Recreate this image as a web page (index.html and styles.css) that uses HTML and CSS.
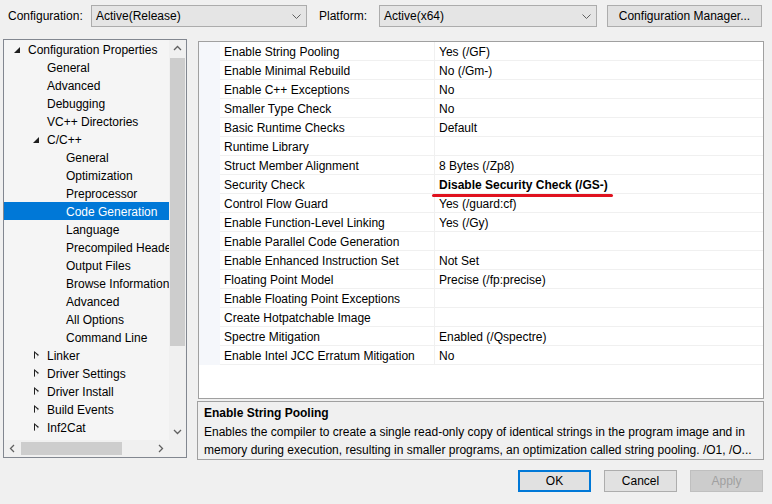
FILE: index.html
```html
<!DOCTYPE html>
<html lang="en">
<head>
    <meta charset="UTF-8">
    <title>Property Pages</title>
    <link rel="stylesheet" href="styles.css">
</head>
<body>

<!-- Configuration / Platform bar -->
<div class="toolbar">
    <span class="label label-config">Configuration:</span>
    <div class="combo combo-config">
        <span>Active(Release)</span>
        <svg class="chevron" width="9" height="5" viewBox="0 0 9 5"><polyline points="0.5,0.5 4.5,4.5 8.5,0.5" fill="none" stroke="#606060" stroke-width="1"/></svg>
    </div>
    <span class="label label-platform">Platform:</span>
    <div class="combo combo-platform">
        <span>Active(x64)</span>
        <svg class="chevron" width="9" height="5" viewBox="0 0 9 5"><polyline points="0.5,0.5 4.5,4.5 8.5,0.5" fill="none" stroke="#606060" stroke-width="1"/></svg>
    </div>
    <button class="btn btn-manager">Configuration Manager...</button>
</div>

<div class="main">

    <!-- Tree -->
    <div class="tree">
        <div class="tree-body">
            <div class="tree-list">
                <div class="node lvl0"><span class="tri open"></span>Configuration Properties</div>
                <div class="node lvl1">General</div>
                <div class="node lvl1">Advanced</div>
                <div class="node lvl1">Debugging</div>
                <div class="node lvl1">VC++ Directories</div>
                <div class="node lvl1 has-tri"><span class="tri open"></span>C/C++</div>
                <div class="node lvl2">General</div>
                <div class="node lvl2">Optimization</div>
                <div class="node lvl2">Preprocessor</div>
                <div class="node lvl2 selected">Code Generation</div>
                <div class="node lvl2">Language</div>
                <div class="node lvl2">Precompiled Headers</div>
                <div class="node lvl2">Output Files</div>
                <div class="node lvl2">Browse Information</div>
                <div class="node lvl2">Advanced</div>
                <div class="node lvl2">All Options</div>
                <div class="node lvl2">Command Line</div>
                <div class="node lvl1 has-tri"><span class="tri closed"></span>Linker</div>
                <div class="node lvl1 has-tri"><span class="tri closed"></span>Driver Settings</div>
                <div class="node lvl1 has-tri"><span class="tri closed"></span>Driver Install</div>
                <div class="node lvl1 has-tri"><span class="tri closed"></span>Build Events</div>
                <div class="node lvl1 has-tri"><span class="tri closed"></span>Inf2Cat</div>
            </div>
            <div class="vscroll">
                <svg class="arrow" width="17" height="17" viewBox="0 0 17 17"><polyline points="5,10 8.5,6.5 12,10" fill="none" stroke="#606060" stroke-width="1.3"/></svg>
                <div class="vtrack"><div class="vthumb"></div></div>
                <svg class="arrow" width="17" height="17" viewBox="0 0 17 17"><polyline points="5,7 8.5,10.5 12,7" fill="none" stroke="#606060" stroke-width="1.3"/></svg>
            </div>
        </div>
        <div class="tree-foot">
            <div class="hscroll">
                <svg class="arrow" width="17" height="17" viewBox="0 0 17 17"><polyline points="10,5 6.5,8.5 10,12" fill="none" stroke="#606060" stroke-width="1.3"/></svg>
                <div class="htrack"><div class="hthumb"></div></div>
                <svg class="arrow" width="17" height="17" viewBox="0 0 17 17"><polyline points="7,5 10.5,8.5 7,12" fill="none" stroke="#606060" stroke-width="1.3"/></svg>
            </div>
            <div class="corner"></div>
        </div>
    </div>

    <div class="right">

        <!-- Property grid -->
        <div class="grid">
            <div class="row"><div class="gutter"></div><div class="name">Enable String Pooling</div><div class="value">Yes (/GF)</div></div>
            <div class="row"><div class="gutter"></div><div class="name">Enable Minimal Rebuild</div><div class="value">No (/Gm-)</div></div>
            <div class="row"><div class="gutter"></div><div class="name">Enable C++ Exceptions</div><div class="value">No</div></div>
            <div class="row"><div class="gutter"></div><div class="name">Smaller Type Check</div><div class="value">No</div></div>
            <div class="row"><div class="gutter"></div><div class="name">Basic Runtime Checks</div><div class="value">Default</div></div>
            <div class="row"><div class="gutter"></div><div class="name">Runtime Library</div><div class="value"></div></div>
            <div class="row"><div class="gutter"></div><div class="name">Struct Member Alignment</div><div class="value">8 Bytes (/Zp8)</div></div>
            <div class="row"><div class="gutter"></div><div class="name">Security Check</div><div class="value"><span class="changed">Disable Security Check (/GS-)</span></div></div>
            <div class="row"><div class="gutter"></div><div class="name">Control Flow Guard</div><div class="value">Yes (/guard:cf)</div></div>
            <div class="row"><div class="gutter"></div><div class="name">Enable Function-Level Linking</div><div class="value">Yes (/Gy)</div></div>
            <div class="row"><div class="gutter"></div><div class="name">Enable Parallel Code Generation</div><div class="value"></div></div>
            <div class="row"><div class="gutter"></div><div class="name">Enable Enhanced Instruction Set</div><div class="value">Not Set</div></div>
            <div class="row"><div class="gutter"></div><div class="name">Floating Point Model</div><div class="value">Precise (/fp:precise)</div></div>
            <div class="row"><div class="gutter"></div><div class="name">Enable Floating Point Exceptions</div><div class="value"></div></div>
            <div class="row"><div class="gutter"></div><div class="name">Create Hotpatchable Image</div><div class="value"></div></div>
            <div class="row"><div class="gutter"></div><div class="name">Spectre Mitigation</div><div class="value">Enabled (/Qspectre)</div></div>
            <div class="row"><div class="gutter"></div><div class="name">Enable Intel JCC Erratum Mitigation</div><div class="value">No</div></div>
        </div>

        <!-- Description -->
        <div class="desc">
            <div class="desc-title">Enable String Pooling</div>
            <div class="desc-line">Enables the compiler to create a single read-only copy of identical strings in the program image and in</div>
            <div class="desc-line">memory during execution, resulting in smaller programs, an optimization called string pooling. /O1, /O...</div>
        </div>

    </div>
</div>

<!-- Dialog buttons -->
<div class="footer">
    <button class="btn btn-ok">OK</button>
    <button class="btn">Cancel</button>
    <button class="btn" disabled>Apply</button>
</div>

</body>
</html>
```

FILE: styles.css
```css
body {
    margin: 0;
    width: 772px;
    height: 504px;
    background-color: #f0f0f0;
    font-family: "Liberation Sans", Arial, sans-serif;
    font-size: 12px;
    color: #000;
    overflow: hidden;
}

/* top bar */
.toolbar {
    display: flex;
    align-items: center;
    padding: 5px 0 0 8px;
    height: 22px;
}

.label-config {
    width: 83px;
}

.label-platform {
    width: 60px;
    margin-left: 12px;
}

.combo {
    box-sizing: border-box;
    height: 22px;
    display: flex;
    align-items: center;
    justify-content: space-between;
    padding: 0 5px 0 4px;
    background-color: #e5e5e5;
    border: 1px solid #acacac;
}

.combo-config {
    width: 216px;
}

.combo-platform {
    width: 218px;
}

.btn {
    box-sizing: border-box;
    height: 22px;
    padding: 0;
    font-family: inherit;
    font-size: 12px;
    color: #000;
    background-color: #e1e1e1;
    border: 1px solid #adadad;
}

.btn-manager {
    width: 155px;
    margin-left: 10px;
}

/* main area */
.main {
    display: flex;
    margin-top: 12px;
    padding-left: 3px;
}

.tree {
    width: 184px;
    height: 419px;
    box-sizing: border-box;
    border: 1px solid #828790;
    background-color: #f5f5f5;
    display: flex;
    flex-direction: column;
}

.tree-body {
    display: flex;
    height: 400px;
}

.tree-list {
    width: 165px;
    overflow: hidden;
}

.node {
    box-sizing: border-box;
    height: 18px;
    padding-top: 1px;
    line-height: 18px;
    white-space: nowrap;
    position: relative;
}

.lvl0 {
    padding-left: 24px;
}

.lvl1 {
    padding-left: 43px;
}

.lvl2 {
    padding-left: 62px;
}

.selected {
    background-color: #0078d7;
    color: #fff;
}

.tri {
    position: absolute;
    top: 0;
    width: 0;
    height: 0;
}

.lvl0 .tri {
    left: 10px;
}

.lvl1 .tri {
    left: 29px;
}

.tri.open {
    top: 7px;
    border-left: 6px solid transparent;
    border-bottom: 6px solid #1e1e1e;
}

.tri.closed {
    top: 5px;
    left: 30px;
    width: 5px;
    height: 9px;
}

.tri.closed::before {
    content: "";
    position: absolute;
    left: 0;
    top: 0;
    border-top: 4.5px solid transparent;
    border-bottom: 4.5px solid transparent;
    border-left: 5px solid #1e1e1e;
}

.tri.closed::after {
    content: "";
    position: absolute;
    left: 1px;
    top: 1.5px;
    border-top: 3px solid transparent;
    border-bottom: 3px solid transparent;
    border-left: 3px solid #f5f5f5;
}

.vscroll {
    width: 17px;
    background-color: #f0f0f0;
    display: flex;
    flex-direction: column;
}

.vtrack {
    flex: 1;
    padding: 1px 1px;
}

.vthumb {
    height: 288px;
    background-color: #cdcdcd;
}

.tree-foot {
    display: flex;
    height: 17px;
}

.hscroll {
    width: 165px;
    display: flex;
    background-color: #f0f0f0;
}

.htrack {
    flex: 1;
    padding: 2px 0;
}

.hthumb {
    width: 101px;
    height: 13px;
    background-color: #cdcdcd;
}

.corner {
    width: 17px;
    background-color: #f0f0f0;
}

.arrow {
    display: block;
    flex-shrink: 0;
}

/* right side */
.right {
    width: 567px;
    margin-left: 10px;
    display: flex;
    flex-direction: column;
}

.grid {
    box-sizing: border-box;
    height: 358px;
    margin: 2px 0 0 1px;
    border: 1px solid #a0a0a0;
    background-color: #fff;
}

.row {
    display: flex;
    height: 19px;
    line-height: 18px;
    white-space: nowrap;
}

.gutter {
    width: 21px;
    background-color: #f5f7fb;
}

.name {
    box-sizing: border-box;
    width: 214px;
    padding: 1px 0 0 4px;
    border-bottom: 1px solid #f0f0f0;
}

.value {
    box-sizing: border-box;
    flex: 1;
    padding: 1px 0 0 4px;
    border-left: 1px solid #f0f0f0;
    border-bottom: 1px solid #f0f0f0;
}

.changed {
    font-weight: bold;
    position: relative;
}

/* red annotation stroke under the changed value */
.changed::after {
    content: "";
    position: absolute;
    left: -7px;
    right: -5px;
    top: 16px;
    height: 3px;
    border-radius: 2px;
    background-color: #e0121f;
}

.desc {
    box-sizing: border-box;
    height: 59px;
    margin-top: 2px;
    padding: 2px 0 0 6px;
    border: 1px solid #a0a0a0;
    line-height: 18.5px;
}

.desc-title {
    font-weight: bold;
}

.desc-line {
    white-space: nowrap;
    overflow: hidden;
}

/* footer */
.footer {
    display: flex;
    justify-content: flex-end;
    gap: 13px;
    padding: 10px 9px 0 0;
}

.footer .btn {
    width: 73px;
}

.btn-ok {
    border: 2px solid #0078d7;
}

.btn:disabled {
    background-color: #cccccc;
    border-color: #bfbfbf;
    color: #a0a0a0;
}
```
